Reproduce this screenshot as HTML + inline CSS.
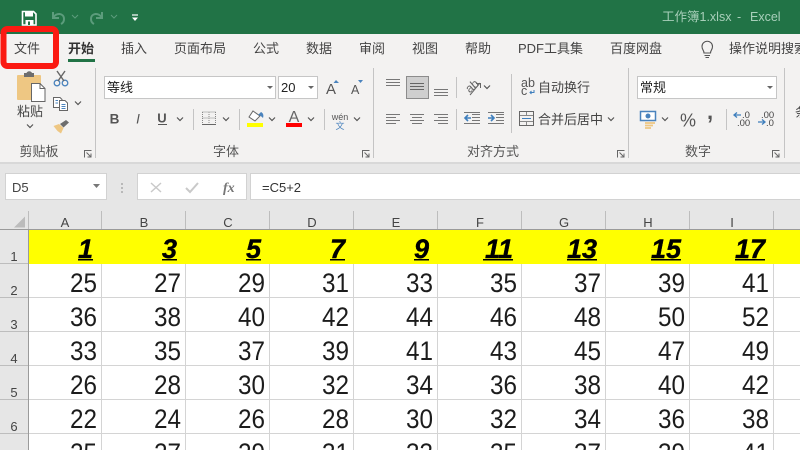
<!DOCTYPE html>
<html lang="zh"><head><meta charset="utf-8"><title>Excel</title>
<style>
html,body{margin:0;padding:0;width:800px;height:450px;overflow:hidden;background:#e6e6e6}
svg{display:block}
text{font-family:"Liberation Sans","Noto Sans CJK SC",sans-serif}
.t{font-size:13px;fill:#444}
.n{font-size:26.500px;fill:#1c1c1c;text-anchor:end}
.h{font-size:27px;font-weight:bold;font-style:italic;fill:#000;stroke:#000;stroke-width:.4px;text-anchor:end}
.c{font-size:13px;fill:#444;text-anchor:middle}
.g{font-size:13px;fill:#555;text-anchor:middle}
.ch{fill:none;stroke:#555;stroke-width:1.2}
</style></head><body>
<svg width="800" height="450" viewBox="0 0 800 450" xmlns="http://www.w3.org/2000/svg">
<defs>
<path id="chev" d="M-3-1.500 0 1.500 3-1.500" class="ch"/>
<g id="launch" fill="none" stroke="#666" stroke-width="1"><path d="M-3.500 3.500V-3.500H3.500"/><path d="M-1.500-1.500 3 3M3-.5V3H-.5"/></g>
</defs>
<rect width="800" height="450" fill="#e6e6e6"/>
<!-- title bar -->
<rect width="800" height="34" fill="#217346"/>
<g>
<path d="M22.500 11.500H33.500L36 14V25H22.500Z" fill="none" stroke="#fff" stroke-width="1.600"/>
<rect x="25" y="11.500" width="8" height="5" fill="#fff"/>
<rect x="25.500" y="20" width="8" height="5" fill="#fff"/>
<rect x="28" y="21.500" width="2" height="3.500" fill="#217346"/>
</g>
<g fill="none" stroke="#5c9c7c" stroke-width="2"><path d="M53 12V18H59M53 18C56 12 64 13 64 19 64 21 63 23 61 24"/><path d="M102 12V18H96M102 18C99 12 91 13 91 19 91 21 92 23 94 24"/></g>
<path d="M72 15 75 18 78 15M111 15 114 18 117 15" fill="none" stroke="#5c9c7c" stroke-width="1"/>
<path d="M132 15H138" stroke="#fff" stroke-width="1.200"/><path d="M132 17.500H138L135 21Z" fill="#fff"/>
<text x="662" y="21" font-size="12.500" fill="#a8cfba">工作簿1.xlsx</text>
<text x="737" y="21" font-size="12.500" fill="#a8cfba">-</text>
<text x="750" y="21" font-size="12.500" fill="#a8cfba">Excel</text>
<!-- ribbon -->
<rect y="34" width="800" height="128" fill="#f3f2f1"/>
<text class="t" x="14" y="53">文件</text>
<text class="t" x="68" y="53" font-weight="bold" style="fill:#333">开始</text>
<rect x="68" y="59" width="27" height="3" fill="#217346"/>
<text class="t" x="121" y="53">插入</text>
<text class="t" x="174" y="53">页面布局</text>
<text class="t" x="253" y="53">公式</text>
<text class="t" x="306" y="53">数据</text>
<text class="t" x="359" y="53">审阅</text>
<text class="t" x="412" y="53">视图</text>
<text class="t" x="465" y="53">帮助</text>
<text class="t" x="518" y="53">PDF工具集</text>
<text class="t" x="610" y="53">百度网盘</text>
<g fill="none" stroke="#555" stroke-width="1.100"><path d="M704 53C704 50 702 50 702 46.500A5.200 5.200 0 0 1 712.500 46.500C712.500 50 710.500 50 710.500 53Z"/><path d="M704.500 55.500H710M705.500 57.500H709"/></g>
<text class="t" x="729" y="53">操作说明搜索</text>
<!-- separators -->
<g fill="#c4c4c4"><rect x="95" y="68" width="1" height="90"/><rect x="373" y="68" width="1" height="90"/><rect x="628" y="68" width="1" height="90"/><rect x="784" y="68" width="1" height="90"/>
<rect x="193" y="109" width="1" height="21"/><rect x="239" y="109" width="1" height="21"/><rect x="324" y="109" width="1" height="21"/>
<rect x="456" y="77" width="1" height="21"/><rect x="456" y="109" width="1" height="21"/><rect x="511" y="74" width="1" height="59"/><rect x="726" y="109" width="1" height="21"/></g>
<!-- clipboard -->
<rect x="17" y="75" width="24" height="25" rx="1" fill="#eec783"/>
<path d="M24 75V73H26.500A3 3 0 0 1 32 73H34V77H24Z" fill="#6d6d6d"/>
<path d="M31.500 83.500H40L45 88.500V101.500H31.500Z" fill="#fff" stroke="#666"/>
<path d="M40 83.500V88.500H45" fill="none" stroke="#666"/>
<text class="t" x="17" y="116">粘贴</text>
<use href="#chev" x="30" y="126"/>
<g fill="none" stroke="#4a83bd" stroke-width="1.300"><circle cx="57" cy="83" r="2.800"/><circle cx="65" cy="83" r="2.800"/></g>
<path d="M58 81 65 71M64 81 57 71" stroke="#666" stroke-width="1.400"/>
<g fill="#fff" stroke="#666"><path d="M53.500 97.500H60L62 99.500V107.500H53.500Z"/><path d="M59.500 100.500H65L67.500 103V110.500H59.500Z"/></g>
<path d="M55.500 100.500H58M55.500 103H58M61.500 104.500H65.500M61.500 106.500H65.500M61.500 108.500H65.500" stroke="#4a83bd"/>
<use href="#chev" x="78" y="103"/>
<path d="M53.500 126 59 124 63.500 128 61 133.500 57.500 131Z" fill="#eec783"/>
<path d="M60 124 66 120 69 122.500 63.500 127.500Z" fill="#6d6d6d"/>
<text class="g" x="39" y="156">剪贴板</text>
<use href="#launch" x="88" y="154"/>
<!-- font -->
<rect x="104.500" y="76.500" width="171" height="22" fill="#fff" stroke="#c6c6c6"/>
<text x="107" y="92" font-size="13" fill="#222">等线</text>
<path d="M267 86H273L270 89Z" fill="#666"/>
<rect x="278.500" y="76.500" width="39" height="22" fill="#fff" stroke="#c6c6c6"/>
<text x="281" y="92" font-size="13" fill="#222">20</text>
<path d="M308 86H314L311 89Z" fill="#666"/>
<text x="326" y="94" font-size="15" fill="#555">A</text><path d="M333.500 83 336 80 339 83Z" fill="#4a83bd"/>
<text x="351" y="94" font-size="12.500" fill="#555">A</text><path d="M358 80H363L360.500 83Z" fill="#4a83bd"/>
<text x="114.500" y="123.500" font-size="13.500" font-weight="bold" fill="#555" text-anchor="middle">B</text>
<text x="138" y="123.500" font-size="13.500" font-style="italic" fill="#555" text-anchor="middle">I</text>
<text x="162" y="122.500" font-size="13" fill="#555" text-anchor="middle" font-weight="bold">U</text><rect x="158" y="124" width="9" height="1" fill="#555"/>
<use href="#chev" x="180" y="119"/>
<path d="M202.500 112H215.500M202.500 118H215.500M202.500 112V124M209 112V124M215.500 112V124" stroke="#888" stroke-dasharray="1 1" fill="none"/><rect x="202" y="124" width="14" height="1" fill="#666"/>
<use href="#chev" x="226" y="119"/>
<path d="M249 117 253 111 260 116 255 121Z" fill="#fff" stroke="#666"/><path d="M261 112C263 113 264 115 263 118 261 116 260 115 258 115Z" fill="#4a83bd"/>
<rect x="247" y="123" width="16" height="4" fill="#ff0"/>
<use href="#chev" x="272" y="119"/>
<text x="294" y="122" font-size="16" fill="#666" text-anchor="middle">A</text>
<rect x="286" y="123" width="16" height="4" fill="#f00"/>
<use href="#chev" x="311" y="119"/>
<text x="340" y="120" font-size="9" fill="#555" text-anchor="middle">wén</text>
<text x="340" y="129" font-size="9" fill="#4a83bd" text-anchor="middle">文</text>
<use href="#chev" x="357" y="119"/>
<text class="g" x="226" y="156">字体</text>
<use href="#launch" x="366" y="154"/>
<!-- alignment -->
<g stroke="#777" fill="none"><path d="M386 79.500H400M386 82.500H400M386 85.500H400"/>
<path d="M434 89.500H448M434 92.500H448M434 95.500H448"/></g>
<rect x="406.500" y="76.500" width="22" height="22" fill="#cfcfcf" stroke="#8c8c8c"/>
<path d="M410 83.500H424M410 86.500H424M410 89.500H424" stroke="#666" fill="none"/>
<g stroke="#777" fill="none">
<path d="M386 114.500H400M386 117.500H396M386 120.500H400M386 123.500H396"/>
<path d="M410 114.500H424M412 117.500H422M410 120.500H424M412 123.500H422"/>
<path d="M434 114.500H448M438 117.500H448M434 120.500H448M438 123.500H448"/>
<path d="M472 114.500H480M472 117.500H480M472 120.500H480M464 123.500H480M464 112.500H480"/>
<path d="M496 114.500H504M496 117.500H504M496 120.500H504M488 123.500H504M488 112.500H504"/>
</g>
<path d="M465 118H471M468 115 465 118 468 121" fill="none" stroke="#3f7fbd" stroke-width="1.600"/>
<path d="M488 118H494M491 115 494 118 491 121" fill="none" stroke="#3f7fbd" stroke-width="1.600"/>
<text x="472" y="90" font-size="12" fill="#666" text-anchor="middle" transform="rotate(-40 472 86)">ab</text>
<path d="M470 95 480 83M476 83.500H480.500V88" stroke="#666" fill="none"/>
<use href="#chev" x="487" y="87"/>
<text x="521" y="87" font-size="12.500" fill="#555">ab</text><text x="521" y="95" font-size="12.500" fill="#555">c</text>
<path d="M534 90V92.500H530M531.500 91 530 92.500 531.500 94" stroke="#3f7fbd" fill="none"/>
<text class="t" x="538" y="92">自动换行</text>
<rect x="519.500" y="111.500" width="14" height="14" fill="none" stroke="#666"/>
<path d="M520 115.500H533M520 121.500H533M526.500 112V115M526.500 122V125" stroke="#888"/>
<path d="M522 118.500H531" stroke="#3f7fbd"/>
<text class="t" x="538" y="124">合并后居中</text>
<use href="#chev" x="611" y="119"/>
<text class="g" x="493" y="156">对齐方式</text>
<use href="#launch" x="621" y="154"/>
<!-- number -->
<rect x="637.500" y="76.500" width="139" height="22" fill="#fff" stroke="#c6c6c6"/>
<text x="640" y="92" font-size="13" fill="#222">常规</text>
<path d="M767 86H773L770 89Z" fill="#666"/>
<rect x="640.500" y="111.500" width="15" height="9" fill="#fff" stroke="#4a83bd" stroke-width="1.500"/><circle cx="648" cy="116" r="2.500" fill="#4a83bd"/>
<path d="M645 123H655M645 125.500H653M645 128H651" stroke="#eec783" stroke-width="1.800"/>
<use href="#chev" x="665" y="119"/>
<text x="688" y="126.500" font-size="18" fill="#555" text-anchor="middle">%</text>
<text x="710" y="119" font-size="22" font-weight="bold" fill="#555" text-anchor="middle">,</text>
<text x="742" y="118" font-size="9.500" fill="#444">.0</text><text x="737" y="126" font-size="9.500" fill="#444">.00</text>
<path d="M734 115H741M737 112.500 734 115 737 117.500" stroke="#3f7fbd" fill="none" stroke-width="1.300"/>
<text x="761" y="118" font-size="9.500" fill="#444">.00</text><text x="766" y="126" font-size="9.500" fill="#444">.0</text>
<path d="M758 122H765M762 119.500 765 122 762 124.500" stroke="#3f7fbd" fill="none" stroke-width="1.300"/>
<text class="g" x="698" y="156">数字</text>
<use href="#launch" x="776" y="154"/>
<text x="795" y="117" font-size="13" fill="#444">条</text>
<rect y="162" width="800" height="2" fill="#d8d8d8"/>
<!-- formula bar -->
<rect x="5.500" y="173.500" width="101" height="26" fill="#fff" stroke="#d2d2d2"/>
<text x="12" y="192" font-size="13" fill="#444">D5</text>
<path d="M93 184H100L96.500 188Z" fill="#777"/>
<path d="M122 183v2M122 187v2M122 191v2" stroke="#aaa" stroke-width="1.500"/>
<rect x="137.500" y="173.500" width="109" height="26" fill="#fff" stroke="#d2d2d2"/>
<path d="M151 183 161 192M161 183 151 192" stroke="#c9c9c9" stroke-width="1.500"/>
<path d="M186 188 190 192 198 183" fill="none" stroke="#c9c9c9" stroke-width="2"/>
<text x="223" y="192" font-size="14" font-style="italic" font-weight="bold" fill="#777" style="font-family:'Liberation Serif',serif">fx</text>
<rect x="250.500" y="173.500" width="560" height="26" fill="#fff" stroke="#d2d2d2"/>
<text x="262" y="192" font-size="13" fill="#333">=C5+2</text>
<!-- grid -->
<rect x="29" y="230" width="771" height="220" fill="#fff"/>
<rect x="29" y="230" width="771" height="34" fill="#ff0"/>
<path d="M14 227.500 25 216.500V227.500Z" fill="#bcbcbc"/>
<g fill="#d4d4d4">
<rect x="101" y="264" width="1" height="186"/><rect x="185" y="264" width="1" height="186"/><rect x="269" y="264" width="1" height="186"/><rect x="353" y="264" width="1" height="186"/><rect x="437" y="264" width="1" height="186"/><rect x="521" y="264" width="1" height="186"/><rect x="605" y="264" width="1" height="186"/><rect x="689" y="264" width="1" height="186"/><rect x="773" y="264" width="1" height="186"/>
<rect x="29" y="297" width="771" height="1"/><rect x="29" y="331" width="771" height="1"/><rect x="29" y="365" width="771" height="1"/><rect x="29" y="399" width="771" height="1"/><rect x="29" y="433" width="771" height="1"/>
</g>
<g fill="#bdbdbd">
<rect x="28" y="211" width="1" height="18"/><rect x="101" y="211" width="1" height="18"/><rect x="185" y="211" width="1" height="18"/><rect x="269" y="211" width="1" height="18"/><rect x="353" y="211" width="1" height="18"/><rect x="437" y="211" width="1" height="18"/><rect x="521" y="211" width="1" height="18"/><rect x="605" y="211" width="1" height="18"/><rect x="689" y="211" width="1" height="18"/><rect x="773" y="211" width="1" height="18"/>
<rect y="263" width="28" height="1"/><rect y="297" width="28" height="1"/><rect y="331" width="28" height="1"/><rect y="365" width="28" height="1"/><rect y="399" width="28" height="1"/><rect y="433" width="28" height="1"/>
</g>
<rect x="28" y="229" width="1" height="221" fill="#9a9a9a"/>
<rect y="229" width="800" height="1" fill="#9a9a9a"/>
<g>
<text class="c" x="65" y="227">A</text><text class="c" x="144" y="227">B</text><text class="c" x="228" y="227">C</text><text class="c" x="312" y="227">D</text><text class="c" x="396" y="227">E</text><text class="c" x="480" y="227">F</text><text class="c" x="564" y="227">G</text><text class="c" x="648" y="227">H</text><text class="c" x="732" y="227">I</text>
<text class="c" x="14" y="261">1</text><text class="c" x="14" y="295">2</text><text class="c" x="14" y="329">3</text><text class="c" x="14" y="363">4</text><text class="c" x="14" y="397">5</text><text class="c" x="14" y="431">6</text>
</g>
<g>
<text class="h" x="93" y="258">1</text><text class="h" x="177" y="258">3</text><text class="h" x="261" y="258">5</text><text class="h" x="345" y="258">7</text><text class="h" x="429" y="258">9</text><text class="h" x="513" y="258">11</text><text class="h" x="597" y="258">13</text><text class="h" x="681" y="258">15</text><text class="h" x="765" y="258">17</text>
</g>
<g fill="#000">
<rect x="78" y="259" width="15" height="1.500"/><rect x="162" y="259" width="15" height="1.500"/><rect x="246" y="259" width="15" height="1.500"/><rect x="330" y="259" width="15" height="1.500"/><rect x="414" y="259" width="15" height="1.500"/><rect x="483" y="259" width="30" height="1.500"/><rect x="567" y="259" width="30" height="1.500"/><rect x="651" y="259" width="30" height="1.500"/><rect x="735" y="259" width="30" height="1.500"/>
</g>
<g>
<text class="n" textLength="27" lengthAdjust="spacingAndGlyphs" x="97" y="292">25</text><text class="n" textLength="27" lengthAdjust="spacingAndGlyphs" x="181" y="292">27</text><text class="n" textLength="27" lengthAdjust="spacingAndGlyphs" x="265" y="292">29</text><text class="n" textLength="27" lengthAdjust="spacingAndGlyphs" x="349" y="292">31</text><text class="n" textLength="27" lengthAdjust="spacingAndGlyphs" x="433" y="292">33</text><text class="n" textLength="27" lengthAdjust="spacingAndGlyphs" x="517" y="292">35</text><text class="n" textLength="27" lengthAdjust="spacingAndGlyphs" x="601" y="292">37</text><text class="n" textLength="27" lengthAdjust="spacingAndGlyphs" x="685" y="292">39</text><text class="n" textLength="27" lengthAdjust="spacingAndGlyphs" x="769" y="292">41</text>
<text class="n" textLength="27" lengthAdjust="spacingAndGlyphs" x="97" y="326">36</text><text class="n" textLength="27" lengthAdjust="spacingAndGlyphs" x="181" y="326">38</text><text class="n" textLength="27" lengthAdjust="spacingAndGlyphs" x="265" y="326">40</text><text class="n" textLength="27" lengthAdjust="spacingAndGlyphs" x="349" y="326">42</text><text class="n" textLength="27" lengthAdjust="spacingAndGlyphs" x="433" y="326">44</text><text class="n" textLength="27" lengthAdjust="spacingAndGlyphs" x="517" y="326">46</text><text class="n" textLength="27" lengthAdjust="spacingAndGlyphs" x="601" y="326">48</text><text class="n" textLength="27" lengthAdjust="spacingAndGlyphs" x="685" y="326">50</text><text class="n" textLength="27" lengthAdjust="spacingAndGlyphs" x="769" y="326">52</text>
<text class="n" textLength="27" lengthAdjust="spacingAndGlyphs" x="97" y="360">33</text><text class="n" textLength="27" lengthAdjust="spacingAndGlyphs" x="181" y="360">35</text><text class="n" textLength="27" lengthAdjust="spacingAndGlyphs" x="265" y="360">37</text><text class="n" textLength="27" lengthAdjust="spacingAndGlyphs" x="349" y="360">39</text><text class="n" textLength="27" lengthAdjust="spacingAndGlyphs" x="433" y="360">41</text><text class="n" textLength="27" lengthAdjust="spacingAndGlyphs" x="517" y="360">43</text><text class="n" textLength="27" lengthAdjust="spacingAndGlyphs" x="601" y="360">45</text><text class="n" textLength="27" lengthAdjust="spacingAndGlyphs" x="685" y="360">47</text><text class="n" textLength="27" lengthAdjust="spacingAndGlyphs" x="769" y="360">49</text>
<text class="n" textLength="27" lengthAdjust="spacingAndGlyphs" x="97" y="394">26</text><text class="n" textLength="27" lengthAdjust="spacingAndGlyphs" x="181" y="394">28</text><text class="n" textLength="27" lengthAdjust="spacingAndGlyphs" x="265" y="394">30</text><text class="n" textLength="27" lengthAdjust="spacingAndGlyphs" x="349" y="394">32</text><text class="n" textLength="27" lengthAdjust="spacingAndGlyphs" x="433" y="394">34</text><text class="n" textLength="27" lengthAdjust="spacingAndGlyphs" x="517" y="394">36</text><text class="n" textLength="27" lengthAdjust="spacingAndGlyphs" x="601" y="394">38</text><text class="n" textLength="27" lengthAdjust="spacingAndGlyphs" x="685" y="394">40</text><text class="n" textLength="27" lengthAdjust="spacingAndGlyphs" x="769" y="394">42</text>
<text class="n" textLength="27" lengthAdjust="spacingAndGlyphs" x="97" y="428">22</text><text class="n" textLength="27" lengthAdjust="spacingAndGlyphs" x="181" y="428">24</text><text class="n" textLength="27" lengthAdjust="spacingAndGlyphs" x="265" y="428">26</text><text class="n" textLength="27" lengthAdjust="spacingAndGlyphs" x="349" y="428">28</text><text class="n" textLength="27" lengthAdjust="spacingAndGlyphs" x="433" y="428">30</text><text class="n" textLength="27" lengthAdjust="spacingAndGlyphs" x="517" y="428">32</text><text class="n" textLength="27" lengthAdjust="spacingAndGlyphs" x="601" y="428">34</text><text class="n" textLength="27" lengthAdjust="spacingAndGlyphs" x="685" y="428">36</text><text class="n" textLength="27" lengthAdjust="spacingAndGlyphs" x="769" y="428">38</text>
<text class="n" textLength="27" lengthAdjust="spacingAndGlyphs" x="97" y="462">25</text><text class="n" textLength="27" lengthAdjust="spacingAndGlyphs" x="181" y="462">27</text><text class="n" textLength="27" lengthAdjust="spacingAndGlyphs" x="265" y="462">29</text><text class="n" textLength="27" lengthAdjust="spacingAndGlyphs" x="349" y="462">31</text><text class="n" textLength="27" lengthAdjust="spacingAndGlyphs" x="433" y="462">33</text><text class="n" textLength="27" lengthAdjust="spacingAndGlyphs" x="517" y="462">35</text><text class="n" textLength="27" lengthAdjust="spacingAndGlyphs" x="601" y="462">37</text><text class="n" textLength="27" lengthAdjust="spacingAndGlyphs" x="685" y="462">39</text><text class="n" textLength="27" lengthAdjust="spacingAndGlyphs" x="769" y="462">41</text>
</g>
<!-- red highlight -->
<rect x="3.500" y="29" width="52.500" height="37" rx="4" fill="none" stroke="#fb1a12" stroke-width="6"/>
</svg>
</body></html>
